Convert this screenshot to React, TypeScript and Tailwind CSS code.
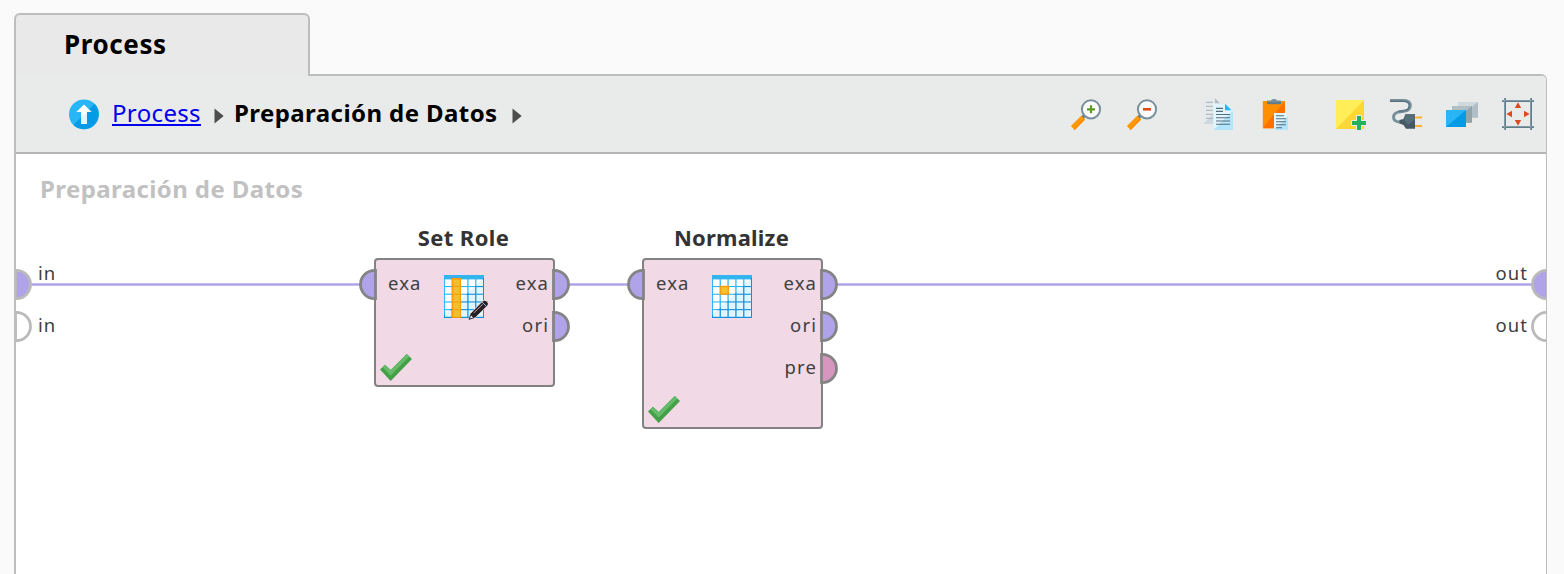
import React from 'react';

const ICON = 'block h-8 w-8 shrink-0';

function ZoomIcon({ minus = false }: { minus?: boolean }) {
  return (
    <svg className={ICON} viewBox="0 0 32 32">
      <path d="M11.800 20.200 15 17" stroke="#607d8b" strokeWidth="3.400" />
      <path d="M2.800 30 13.200 19.600" stroke="#ff9800" strokeWidth="5.400" />
      <path d="M4.200 31.400 14.600 21" stroke="#f98a05" strokeWidth="1.400" />
      <circle cx="21" cy="11.300" r="9.100" fill="#fcfcfc" stroke="#78909c" strokeWidth="2" />
      {minus ? (
        <path d="M17 11.300h8" stroke="#dd4b1e" strokeWidth="2.600" />
      ) : (
        <path d="M17 11.300h8M21 7.300v8" stroke="#5a9a22" strokeWidth="2.200" />
      )}
    </svg>
  );
}

function CopyIcon() {
  return (
    <svg className={ICON} viewBox="0 0 32 32">
      <path d="M1.300.3H13l5 5V26H1.300z" fill="#e6eaec" />
      <path d="M1.300 26 18 8v18z" fill="#cfd8dc" />
      <path d="M13 .3l5 5h-5z" fill="#b0bec5" />
      <path d="M4 4.300h7M4 8.300h7M4 12.300h7M4 16.300h7M4 20.300h7" stroke="#a3b1b8" strokeWidth="1" />
      <path d="M11.300 6H23l8 6.500V32H11.300z" fill="#e1f5fe" />
      <path d="M11.300 32 31 12.500V32z" fill="#b3e5fc" />
      <path d="M23 5.700l6.600 6.600H23z" fill="#29b6f6" />
      <path d="M14 10.400h7M14 13.400h7M14 16.500h14M14 19.800h14M14 23h14M14 26.200h14" stroke="#546e7a" strokeWidth="1.100" />
    </svg>
  );
}

function PasteIcon() {
  return (
    <svg className={ICON} viewBox="0 0 32 32">
      <path d="M4.800 3h22v27.200h-22z" fill="#ff8f00" />
      <path d="M26.800 3v27.200h-22z" fill="#ff6f00" />
      <path d="M9 2.400h4C14 .4 18 .4 19 2.400h4V6H9z" fill="#78909c" />
      <path d="M9 4h14v2.200H9z" fill="#607d8b" />
      <path d="M16 15h11l3 3v14H16z" fill="#e1f5fe" />
      <path d="M16 32 30 18v14z" fill="#b3e5fc" />
      <path d="M18 17.700h8M18 20.700h10M18 23.700h10M18 26.700h10M18 29.700h6" stroke="#546e7a" strokeWidth="1.100" />
    </svg>
  );
}

function NoteIcon() {
  return (
    <svg className={ICON} viewBox="0 0 32 32">
      <path d="M2 2h28v29H2z" fill="#ffee58" />
      <path d="M30 2v29H2z" fill="#fdd835" />
      <path d="M22 17h6v5h5v6h-5v5h-6v-5h-5v-6h5z" fill="#e8ebea" />
      <path d="M18 25h14M25 18v14" stroke="#27ae60" strokeWidth="4" />
    </svg>
  );
}

function PlugIcon() {
  return (
    <svg className={ICON} viewBox="0 0 32 32">
      <path d="M0 2.500h14C22.500 2.500 22 12 15 13l-6 .9C1.500 15.300 2 23.700 9 24h5" fill="none" stroke="#78909c" strokeWidth="3" />
      <path d="M0 3.400h14C20.500 3.500 21 11.300 14.500 12.500l-6 .9" fill="none" stroke="#546e7a" strokeWidth="1.200" />
      <path d="M24 19.500h8M24 28h8" stroke="#fbb034" strokeWidth="2" />
      <path d="M9.500 22 13.500 21 15.500 16.300H25v14.500H16L13.500 27 9.500 25.500z" fill="#455a64" />
      <path d="M13.500 21 15.500 16.300H25v5L18 27z" fill="#546e7a" />
    </svg>
  );
}

function LayersIcon() {
  return (
    <svg className={ICON} viewBox="0 0 32 32">
      <path d="M12 4h20v15.700H12z" fill="#cfd8dc" />
      <path d="M32 4v15.700H12z" fill="#b0bec5" />
      <path d="M6 8h20v16.700H6z" fill="#b0bec5" />
      <path d="M26 8v16.700H6z" fill="#90a4ae" />
      <path d="M0 12h20v17H0z" fill="#29b6f6" />
      <path d="M20 12v17H0z" fill="#039be5" />
    </svg>
  );
}

function FitIcon() {
  return (
    <svg className={ICON} viewBox="0 0 32 32">
      <path d="M0 3h32M0 29h32M3 0v32M29 0v32" stroke="#607d8b" strokeWidth="2" />
      <path d="M0 2.500h32M0 28.500h32M2.500 0v32M28.500 0v32" stroke="#90a4ae" strokeWidth="0.700" />
      <path d="M16 4.300 19.200 10h-6.400zM16 27.700 12.800 22h6.400zM4.300 16l5.700-3.200v6.400zM27.700 16 22 12.800v6.400z" fill="#dd4b1e" />
    </svg>
  );
}

function UpIcon() {
  return (
    <svg className="block h-8 w-[30px] shrink-0" viewBox="0 0 30 32">
      <circle cx="15" cy="16.400" r="15" fill="#29b6f6" />
      <path d="M25.600 5.800A15 15 0 0 1 4.400 27z" fill="#039be5" />
      <path d="M15 6.500 22.700 14H18v12h-6V14H7.300z" fill="#fff" />
      <path d="M18 14V26h-6v-6z" fill="#e1f5fe" />
    </svg>
  );
}

function Crumb() {
  return (
    <svg className="mt-1 block h-4 w-[10px] shrink-0" viewBox="0 0 10 16">
      <path d="M0.500 0.500 9.700 8 0.500 15.500z" fill="#4d4d4d" />
    </svg>
  );
}

const STEPS = [0, 1, 2, 3, 4];

function TableIcon({ kind, id }: { kind: 'role' | 'normalize'; id: string }) {
  return (
    <svg className="mt-[7px] block h-[46px] w-[46px] shrink-0" viewBox="0 0 46 46">
      <defs>
        <linearGradient id={`${id}-grid`} gradientUnits="userSpaceOnUse" x1="0" y1="0" x2="40" y2="43">
          <stop offset="0.500" stopColor="#29b6f6" />
          <stop offset="0.500" stopColor="#0f8fdc" />
        </linearGradient>
        <linearGradient id={`${id}-cell`} gradientUnits="userSpaceOnUse" x1="0" y1="0" x2="40" y2="43">
          <stop offset="0.500" stopColor="#ffffff" />
          <stop offset="0.500" stopColor="#e1f5fe" />
        </linearGradient>
      </defs>
      <path d="M0 0h40v43H0z" fill={`url(#${id}-grid)`} />
      <path d="M0 0h40l-3.500 4H0z" fill="#32b4ee" />
      {STEPS.map((r) =>
        STEPS.map((c) => (
          <rect key={`${r}${c}`} x={1 + c * 7.85} y={4.4 + r * 7.7} width="6.600" height="6.600" fill={`url(#${id}-cell)`} />
        )),
      )}
      {kind === 'role' ? (
        <>
          <path d="M8 3h9v40H8z" fill="#ff9c05" />
          <path d="M9.300 4.500h6.500v6.600H9.300zM9.300 12.100h6.500v6.700H9.300zM9.300 19.800h6.500v6.700H9.300zM9.300 27.500h6.500v6.700H9.300zM9.300 35.200h6.500v6.600H9.300z" fill="#f3bf30" />
          <path d="M24.300 45 26.300 38.500 38.800 25.800Q40.800 24.300 43 26.300T44 30.300L31.300 42.800z" fill="#272225" stroke="#f1f3f6" strokeWidth="0.800" />
          <path d="M25 44.300 26.800 39.800 30 42.700z" fill="#f0e6e6" stroke="#272225" strokeWidth="0.900" />
          <path d="M30 37.800 38.500 29.300M37.800 26.800l5 5" stroke="#c5c0c4" strokeWidth="0.900" />
        </>
      ) : (
        <path d="M8.800 11.500h7.500V19H8.800z" fill="#f5c433" stroke="#ff9f0a" strokeWidth="1.500" />
      )}
    </svg>
  );
}

function CheckIcon() {
  return (
    <svg className="mt-auto mb-[3px] ml-1 block h-7 w-8 shrink-0" viewBox="0 0 32 28">
      <path d="M0 15.500 5 10.700 10.700 16 26.700 0 32 5 10.700 27z" fill="#43a047" />
      <path d="M2.400 13.200 5 10.700 10.700 16 26.700 0 29.400 2.600 10.700 21.500z" fill="#66bb6a" />
    </svg>
  );
}

type PortProps = { side: 'left' | 'right'; fill: string; stroke?: string };

function Port({ side, fill, stroke = '#848484' }: PortProps) {
  return (
    <svg className="block h-[33px] w-[18px] shrink-0" viewBox="0 0 18 33">
      <path
        d={side === 'right' ? 'M1.500 2.400H2.400A14.100 14.100 0 0 1 2.400 30.600H1.500z' : 'M16.500 2.400H15.600A14.100 14.100 0 0 0 15.600 30.600H16.500z'}
        fill={fill}
        stroke={stroke}
        strokeWidth="2.800"
      />
    </svg>
  );
}

const VIOLET = '#b0a3ea';
const EDGE = '#bababa';
const LABEL = 'text-[18.5px] leading-[30px] tracking-[1.1px] text-[#404040] whitespace-nowrap';

type OutPort = { name: string; fill: string };
type NodeProps = { title: string; kind: 'role' | 'normalize'; outs: OutPort[]; className: string; bodyClass: string; titleClass: string };

function OperatorNode({ title, kind, outs, className, bodyClass, titleClass }: NodeProps) {
  return (
    <section className={`absolute flex w-[181px] flex-col ${className}`}>
      <h3 className={`pb-[9px] text-center text-[22px] leading-6 font-bold whitespace-nowrap text-[#333] ${titleClass}`}>{title}</h3>
      <div className={`flex flex-col rounded-[4px] border-2 border-[#828282] bg-[#f1d9e6] ${bodyClass}`}>
        <div className="flex pt-2">
          <div className="-ml-[17px] flex w-[85px] shrink-0 items-start gap-[11px]">
            <Port side="left" fill={VIOLET} />
            <span className={LABEL}>exa</span>
          </div>
          <TableIcon kind={kind} id={kind} />
          <ul className="flex w-[80px] shrink-0 flex-col">
            {outs.map((out) => (
              <li key={out.name} className="flex h-[42px] items-start justify-end gap-[3px]">
                <span className={LABEL}>{out.name}</span>
                <Port side="right" fill={out.fill} />
              </li>
            ))}
          </ul>
        </div>
        <CheckIcon />
      </div>
    </section>
  );
}

export default function App() {
  return (
    <div className="flex h-[574px] w-[1564px] flex-col overflow-hidden bg-[#fafafa] pt-[13px] pl-[14px] font-['Noto_Sans','Open_Sans',sans-serif]">
      <div className="relative z-10 -mb-[2px] flex h-[63px] w-[296px] items-center rounded-t-[6px] border-2 border-b-0 border-[#bdbdbd] bg-[#e9e9e9] pb-1 pl-[48px]">
        <span className="text-[26px] leading-8 font-bold tracking-[0.6px] text-black">Process</span>
      </div>
      <div className="flex w-[1533px] grow flex-col rounded-tr-[6px] border-t-2 border-r border-l-2 border-[#bdbdbd] bg-white">
        <header className="flex h-[78px] shrink-0 items-center rounded-tr-[4px] border-b-2 border-[#b5b5b5] bg-[#e8ebea] pr-3 pl-[53px]">
          <UpIcon />
          <a className="mb-[3px] ml-[13px] text-[24px] leading-8 tracking-[0.35px] text-[#0000ee] underline decoration-2 underline-offset-[2px]">Process</a>
          <nav className="ml-[13px] flex items-center gap-[10px]">
            <Crumb />
            <span className="mb-[3px] text-[24px] leading-8 font-bold tracking-[0.42px] text-black">Preparación de Datos</span>
            <span className="pl-1"><Crumb /></span>
          </nav>
          <div className="ml-auto flex items-center gap-11">
            <div className="flex gap-6"><ZoomIcon /><ZoomIcon minus /></div>
            <div className="flex gap-6"><CopyIcon /><PasteIcon /></div>
            <div className="flex gap-6"><NoteIcon /><PlugIcon /><LayersIcon /><FitIcon /></div>
          </div>
        </header>
        <main className="relative flex grow flex-col overflow-hidden">
          <h2 className="pt-[19px] pl-6 text-[24px] leading-8 font-bold tracking-[0.4px] text-[#c1c1c1]">Preparación de Datos</h2>

          <svg className="absolute top-0 left-0 h-[420px] w-[1530px]" viewBox="0 0 1530 420">
            <path d="M14 130.500H345M553 130.500H613M821 130.500H1517" stroke="#b0a3ea" strokeWidth="2.600" />
          </svg>

          <div className="relative -mr-[3px] -ml-[2px] flex justify-between pt-[63px]">
            <ul className="flex flex-col">
              <li className="flex h-[42px] items-start gap-[6px]">
                <Port side="right" fill={VIOLET} stroke={EDGE} />
                <span className={`${LABEL} -mt-[10px]`}>in</span>
              </li>
              <li className="flex h-[42px] items-start gap-[6px]">
                <Port side="right" fill="#fff" stroke={EDGE} />
                <span className={LABEL}>in</span>
              </li>
            </ul>
            <ul className="flex flex-col">
              <li className="flex h-[42px] items-start justify-end gap-[3px]">
                <span className={`${LABEL} -mt-[10px]`}>out</span>
                <Port side="left" fill={VIOLET} stroke={EDGE} />
              </li>
              <li className="flex h-[42px] items-start justify-end gap-[3px]">
                <span className={LABEL}>out</span>
                <Port side="left" fill="#fff" stroke={EDGE} />
              </li>
            </ul>
          </div>

          <OperatorNode
            title="Set Role"
            kind="role"
            className="top-[71px] left-[358px]"
            bodyClass="h-[129px]"
            titleClass="pr-[2px] tracking-[0.4px]"
            outs={[
              { name: 'exa', fill: VIOLET },
              { name: 'ori', fill: VIOLET },
            ]}
          />
          <OperatorNode
            title="Normalize"
            kind="normalize"
            className="top-[71px] left-[626px]"
            bodyClass="h-[171px]"
            titleClass="pr-[2px] tracking-[0.2px]"
            outs={[
              { name: 'exa', fill: VIOLET },
              { name: 'ori', fill: VIOLET },
              { name: 'pre', fill: '#d696bd' },
            ]}
          />
        </main>
      </div>
    </div>
  );
}
